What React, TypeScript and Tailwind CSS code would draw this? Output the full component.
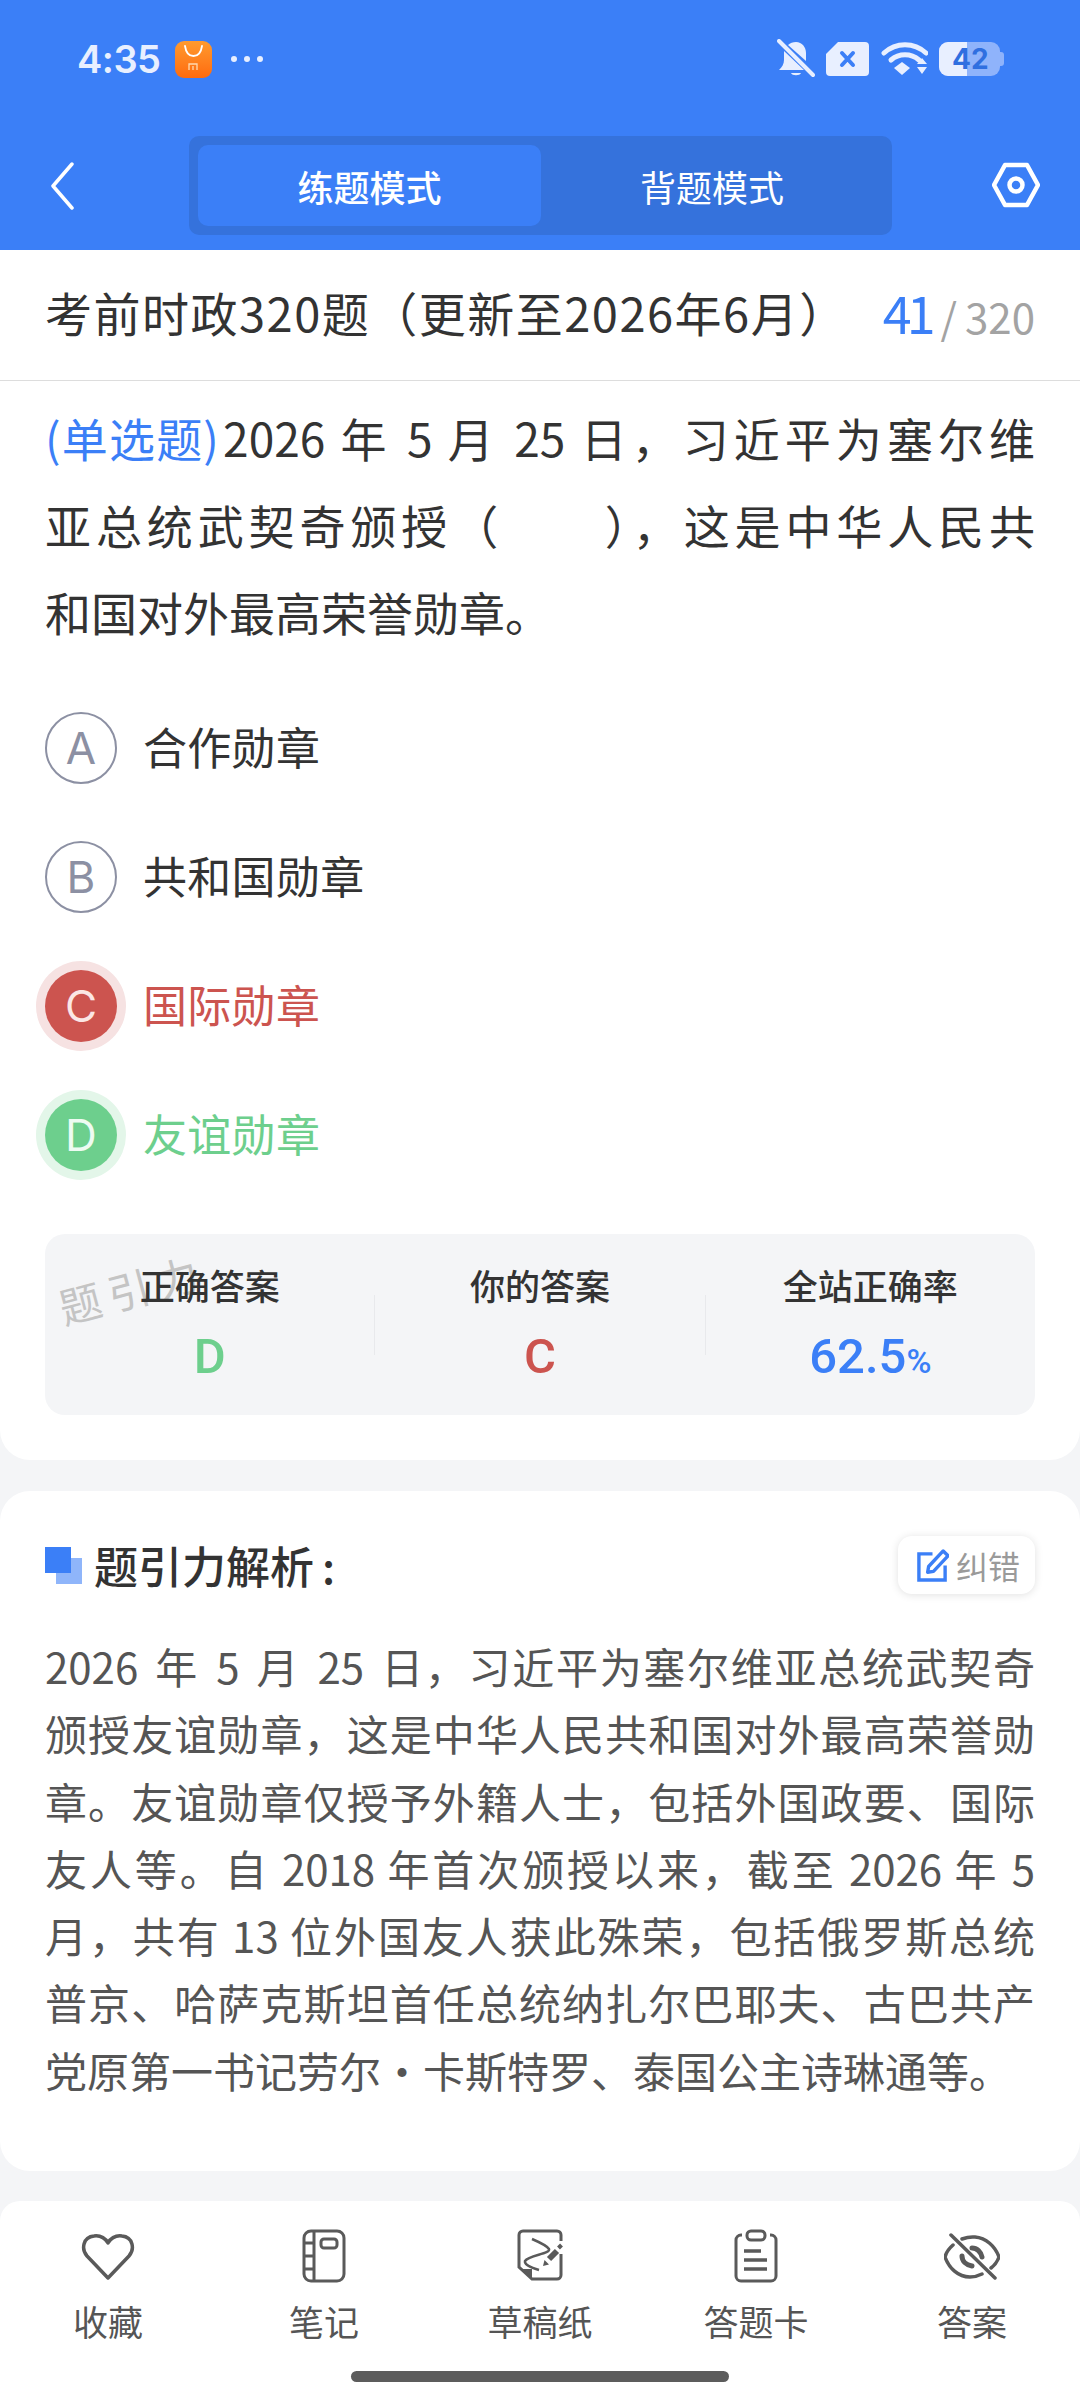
import React from "react";

const cjk = "font-['Noto_Sans_CJK_SC','Noto_Sans',sans-serif]";

const analysisLines = [
  "2026 年 5 月 25 日，习近平为塞尔维亚总统武契奇",
  "颁授友谊勋章，这是中华人民共和国对外最高荣誉勋",
  "章。友谊勋章仅授予外籍人士，包括外国政要、国际",
  "友人等。自 2018 年首次颁授以来，截至 2026 年 5",
  "月，共有 13 位外国友人获此殊荣，包括俄罗斯总统",
  "普京、哈萨克斯坦首任总统纳扎尔巴耶夫、古巴共产",
];

function StatusBar() {
  return (
    <div className="h-[118px] pl-[77px] pr-[76px] flex items-center justify-between text-[#e8efff]">
      <div className="flex items-center">
        <span className="font-['Inter',sans-serif] text-[38px] font-semibold leading-none tracking-[-0.5px]">4:35</span>
        <div className="ml-[14px] w-[37px] h-[37px] rounded-[9px] bg-gradient-to-b from-[#ff9a2e] to-[#ff6a0c] flex flex-col items-center">
          <svg width="37" height="37" viewBox="0 0 37 37" fill="none">
            <path d="M10 5c1 7 4 10 8.500 10S26 12 27 5" stroke="#fff" strokeWidth="1.800" strokeLinecap="round" />
            <path d="M14 29v-6h8v6M18 25v4" stroke="#ffd9b0" strokeWidth="1.300" />
          </svg>
        </div>
        <div className="ml-[19px] flex gap-[7px]">
          <i className="block w-[6px] h-[6px] rounded-full bg-[#e8efff]" />
          <i className="block w-[6px] h-[6px] rounded-full bg-[#e8efff]" />
          <i className="block w-[6px] h-[6px] rounded-full bg-[#e8efff]" />
        </div>
      </div>
      <div className="flex items-center">
        <svg width="38" height="40" viewBox="0 0 38 40" fill="#e8efff">
          <path d="M19 3c6 0 10 5 10 11v8l-18-16c2-2 5-3 8-3zM7 12l20 19H2c3-3 5-6 5-10zM14 34h10c-1 3-9 3-10 0z" />
          <path d="M2 2l34 34" stroke="#e8efff" strokeWidth="4" strokeLinecap="round" />
        </svg>
        <svg className="ml-[11px]" width="43" height="34" viewBox="0 0 43 34">
          <path d="M12 0h27a4 4 0 0 1 4 4v26a4 4 0 0 1-4 4H4a4 4 0 0 1-4-4V12z" fill="#e8efff" />
          <path d="M16 11l11 12M27 11L16 23" stroke="#3b7ff7" strokeWidth="4" strokeLinecap="round" />
        </svg>
        <svg className="ml-[12px]" width="47" height="34" viewBox="0 0 47 34" fill="none">
          <path d="M3 11c12-11 30-11 42 0" stroke="#e8efff" strokeWidth="5" strokeLinecap="round" />
          <path d="M10 18c8-7 20-7 28 0" stroke="#e8efff" strokeWidth="5" strokeLinecap="round" />
          <path d="M15 26l8-6 8 6-8 7z" fill="#e8efff" transform="translate(-2 0)" />
          <path d="M36 22l5-6 5 6zM36 25l5 7 5-7z" fill="#e8efff" />
        </svg>
        <div className="ml-[11px] relative w-[65px] h-[34px]">
          <div className="absolute left-0 top-0 w-[61px] h-[34px] rounded-[9px] bg-[#8fb3fb]" />
          <div className="absolute right-0 top-[10px] w-[4px] h-[14px] rounded-r-[3px] bg-[#8fb3fb]" />
          <div className="absolute left-0 top-0 w-[28px] h-[34px] rounded-l-[9px] bg-[#e8efff]" />
          <div className="absolute left-[13px] top-0 h-[34px] flex items-center font-['Inter',sans-serif] text-[28px] font-bold text-[#2f6fe0] leading-none">42</div>
        </div>
      </div>
    </div>
  );
}

function TopBar() {
  return (
    <div className="h-[132px] flex items-start relative">
      <div className="w-[189px] h-[117px] flex items-start">
        <svg className="ml-[50px] mt-[43px]" width="24" height="50" viewBox="0 0 24 50" fill="none">
          <path d="M22 3L3 25l19 22" stroke="#fff" strokeWidth="3.500" strokeLinecap="round" strokeLinejoin="round" />
        </svg>
      </div>
      <div className="mt-[18px] w-[703px] h-[99px] rounded-[10px] bg-[#3572dc] p-[9px] flex">
        <div className={`w-[343px] rounded-[10px] bg-[#3b7ff7] flex items-center justify-center text-[36px] font-medium text-white ${cjk}`}>练题模式</div>
        <div className={`flex-1 flex items-center justify-center text-[36px] text-white ${cjk}`}>背题模式</div>
      </div>
      <svg className="ml-[100px] mt-[44px]" width="48" height="46" viewBox="0 0 48 46" fill="none">
        <path d="M13 3h22l11 20-11 20H13L2 23z" stroke="#fff" strokeWidth="4.500" strokeLinejoin="round" />
        <circle cx="24" cy="23" r="6.500" stroke="#fff" strokeWidth="4.500" />
      </svg>
    </div>
  );
}

function Option({ letter, text, state }: { letter: string; text: string; state?: "wrong" | "right" }) {
  const circle =
    state === "wrong"
      ? "bg-[#cc544f] text-[#fbe6e5] shadow-[0_0_0_9px_#f6e2e2]"
      : state === "right"
        ? "bg-[#6dcf8d] text-[#eefbf2] shadow-[0_0_0_9px_#e3f6e9]"
        : "border-2 border-[#8c90a3] text-[#8c90a3]";
  const label = state === "wrong" ? "text-[#cc544f]" : state === "right" ? "text-[#6dcf8d]" : "text-[#333333]";
  return (
    <div className="h-[129px] flex items-center pl-[45px]">
      <div className={`w-[72px] h-[72px] rounded-full flex items-center justify-center font-['Inter',sans-serif] text-[44px] ${circle}`}>{letter}</div>
      <div className={`ml-[26px] pb-[3px] text-[44px] tracking-[0.3px] ${label}`}>{text}</div>
    </div>
  );
}

function Stat({ label, children }: { label: string; children: React.ReactNode }) {
  return (
    <div className="relative flex-1 flex flex-col items-center pb-[8px]">
      <div className="text-[35px] font-medium text-[#333333] leading-[48px]">{label}</div>
      <div className="mt-[24px] h-[48px] flex items-center font-['Roboto',sans-serif] text-[49px] font-medium leading-none">{children}</div>
    </div>
  );
}

const NoteIcon = (
  <svg width="44" height="54" viewBox="0 0 44 54" fill="none" stroke="#5a5a5a" strokeWidth="3">
    <rect x="2" y="2" width="40" height="50" rx="7" />
    <path d="M12 2v50M2 14h10M2 27h10M2 40h10" />
    <rect x="19" y="10" width="16" height="9" rx="3" />
  </svg>
);

const DraftIcon = (
  <svg width="46" height="54" viewBox="0 0 46 54" fill="none" stroke="#5a5a5a" strokeWidth="3">
    <path d="M44 25v21a4 4 0 0 1-4 4H15L2 38V6a4 4 0 0 1 4-4h34a4 4 0 0 1 4 4v6" />
    <path d="M4 40h11v9z" fill="#5a5a5a" stroke="none" />
    <path d="M15 10c7 3 15 7 17 10 2 5-20 6-24 12-1 4 7 7 14 9" strokeWidth="2.500" />
    <path d="M32 30l8-8" strokeWidth="6" />
    <path d="M41.500 19l3-3" strokeWidth="4" />
    <path d="M26 37l1.500-6 4.500 4.500z" fill="#5a5a5a" stroke="none" />
  </svg>
);

const CardIcon = (
  <svg width="44" height="54" viewBox="0 0 44 54" fill="none" stroke="#5a5a5a" strokeWidth="3">
    <path d="M8 6H7a5 5 0 0 0-5 5v36a5 5 0 0 0 5 5h30a5 5 0 0 0 5-5V11a5 5 0 0 0-5-5h-1" />
    <rect x="13" y="2" width="18" height="9" rx="4" />
    <path d="M10 22h17M10 31h23M10 40h23" strokeWidth="3.500" />
  </svg>
);

const EyeOffIcon = (
  <svg width="56" height="48" viewBox="0 0 56 48" fill="none" stroke="#5a5a5a" strokeWidth="3.500" strokeLinecap="round">
    <path d="M18 7c4-1.500 8-2.500 13-2 11 1 20 9 24 20-1.500 4-4 8-8 11" />
    <path d="M9 13c-4 3.500-7 8-8 12 4 11 13 20 25 20 4 0 8-1 12-3" />
    <path d="M28 16c5 0 9 4 10 9" strokeWidth="5" />
    <path d="M18 24c0 5 4 9 10 10" strokeWidth="5" />
    <path d="M7 3l44 43" />
  </svg>
);

const HeartIcon = (
  <svg width="54" height="48" viewBox="0 0 54 48" fill="none" stroke="#5a5a5a" strokeWidth="3.500" strokeLinejoin="round">
    <path d="M27 46L6 24C0 17 2 5 13 4c7-1 12 3 14 7 2-4 7-8 14-7 11 1 13 13 7 20z" />
  </svg>
);

function NavItem({ icon, label }: { icon: React.ReactNode; label: string }) {
  return (
    <div className="flex-1 flex flex-col items-center">
      <div className="h-[60px] flex items-center justify-center">{icon}</div>
      <div className="mt-[11px] text-[35px] leading-[48px] text-[#555555]">{label}</div>
    </div>
  );
}

export default function App() {
  return (
    <div className={`relative w-[1080px] h-[2400px] overflow-hidden bg-[#f4f5f7] flex flex-col ${cjk}`}>
      <div className="bg-[#3b7ff7]">
        <StatusBar />
        <TopBar />
      </div>

      {/* Title */}
      <div className="h-[131px] bg-white border-b-[1.5px] border-[#dddddd] flex items-center justify-between pl-[45px] pr-[45px] pb-[5px]">
        <div className="text-[47px] text-[#333333] tracking-[1.5px]">考前时政320题（更新至2026年6月）</div>
        <div className="flex items-baseline pb-[1px]">
          <span className="text-[52px] text-[#3b7ff7] tracking-[-5px]">41</span>
          <span className="text-[42px] text-[#a3a3a3] ml-[10px]">/</span>
          <span className="text-[42px] text-[#a3a3a3] ml-[8px]">320</span>
        </div>
      </div>

      {/* Question */}
      <div className="bg-white rounded-b-[30px] pb-[45px]">
        <div className="px-[45px] pt-[13px] text-[46px] leading-[87px] text-[#333333]">
          <div className="text-justify [text-align-last:justify]">
            <span className="inline-block text-[#3b7ff7] tracking-[1.200px] mr-[3px]">(单选题)</span>2026 年 5 月 25 日，习近平为塞尔维
          </div>
          <div className="text-justify [text-align-last:justify]">亚总统武契奇颁授（　　），这是中华人民共</div>
          <div>和国对外最高荣誉勋章。</div>
        </div>
        <div className="mt-[28px]">
          <Option letter="A" text="合作勋章" />
          <Option letter="B" text="共和国勋章" />
          <Option letter="C" text="国际勋章" state="wrong" />
          <Option letter="D" text="友谊勋章" state="right" />
        </div>
        <div className="relative mx-[45px] mt-[35px] h-[181px] rounded-[20px] bg-[#f4f5f7] flex items-center">
          <div className="absolute left-[12px] top-[22px] -rotate-[15deg] text-[42px] text-[#c4c4c4] tracking-[8px]">题引力</div>
          <Stat label="正确答案"><span className="text-[#6dcf8d]">D</span></Stat>
          <div className="w-px h-[60px] bg-[#e8e9ec]" />
          <Stat label="你的答案"><span className="text-[#cc544f]">C</span></Stat>
          <div className="w-px h-[60px] bg-[#e8e9ec]" />
          <Stat label="全站正确率">
            <span className="text-[#3b7ff7]">62.5<span className="text-[34px]">%</span></span>
          </Stat>
        </div>
      </div>

      {/* Analysis */}
      <div className="mt-[31px] bg-white rounded-[30px] px-[45px] pt-[41px] h-[680px]">
        <div className="flex items-center justify-between">
          <div className="flex items-center">
            <div className="relative w-[37px] h-[37px]">
              <div className="absolute right-0 bottom-0 w-[26px] h-[26px] bg-[#8fb5fa]" />
              <div className="absolute left-0 top-0 w-[26px] h-[26px] bg-[#3b7ff7]" />
            </div>
            <div className="ml-[12px] text-[44px] font-medium text-[#333333]">题引力解析<span className="ml-[8px]">:</span></div>
          </div>
          <div className="w-[137px] h-[58px] rounded-[14px] bg-white shadow-[0_1px_8px_rgba(0,0,0,0.12)] flex items-center justify-center pl-[3px]">
            <svg width="33" height="33" viewBox="0 0 34 34" fill="none" stroke="#3b7ff7" strokeWidth="3.500">
              <path d="M17 5H3v27h27V17" />
              <path d="M28 2l5 5-15 16-6 1 1-6z" strokeLinejoin="round" />
            </svg>
            <span className="ml-[7px] text-[32px] text-[#9a9a9a]">纠错</span>
          </div>
        </div>
        <div className="mt-[34px] text-[42px] leading-[67.300px] text-[#555555]">
          {analysisLines.map((line, i) => (
            <div key={line} className={i === 0 ? "text-justify [text-align-last:justify] [word-spacing:6px]" : "text-justify [text-align-last:justify]"}>{line}</div>
          ))}
          <div>党原第一书记劳尔·卡斯特罗、泰国公主诗琳通等。</div>
        </div>
      </div>

      {/* Bottom nav */}
      <div className="mt-[30px] flex-1 bg-white rounded-t-[20px] pt-[25px] relative">
        <div className="flex">
          <NavItem icon={HeartIcon} label="收藏" />
          <NavItem icon={NoteIcon} label="笔记" />
          <NavItem icon={DraftIcon} label="草稿纸" />
          <NavItem icon={CardIcon} label="答题卡" />
          <NavItem icon={EyeOffIcon} label="答案" />
        </div>
        <div className="absolute left-[351px] bottom-[18px] w-[378px] h-[11px] rounded-full bg-[#5c5c5c]" />
      </div>
    </div>
  );
}
